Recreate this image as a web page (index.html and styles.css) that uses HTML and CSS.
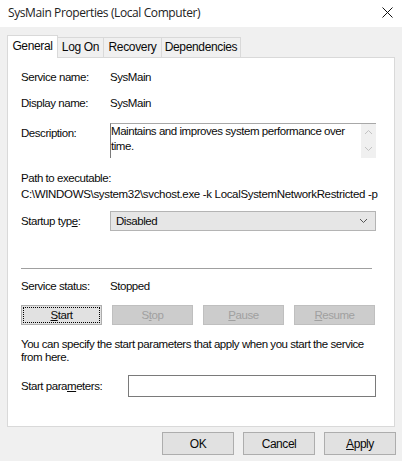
FILE: index.html
```html
<!DOCTYPE html>
<html>
<head>
<meta charset="utf-8">
<link rel="stylesheet" href="styles.css">
</head>
<body>
<div class="dialog">
  <div class="titlebar">
    <span class="title">SysMain Properties (Local Computer)</span>
    <svg class="close" width="11" height="11" viewBox="0 0 11 11"><path d="M0.5 0.5 L10.5 10.5 M10.5 0.5 L0.5 10.5" stroke="#111" stroke-width="1" fill="none"/></svg>
  </div>
  <div class="tabs">
    <div class="tab active">General</div>
    <div class="tab t2">Log On</div>
    <div class="tab t3">Recovery</div>
    <div class="tab t4">Dependencies</div>
  </div>
  <div class="panel">
    <div class="row r1"><span class="lbl">Service name:</span><span>SysMain</span></div>
    <div class="row r2"><span class="lbl">Display name:</span><span>SysMain</span></div>
    <div class="row r3">
      <span class="lbl desc-lbl">Description:</span>
      <div class="textarea">
        <div class="ta-text">Maintains and improves system performance over time.</div>
        <div class="scroll">
          <svg width="9" height="6" viewBox="0 0 9 6"><path d="M1 5 L4.5 1.5 L8 5" stroke="#c2c2c2" fill="none"/></svg>
          <svg width="9" height="6" viewBox="0 0 9 6"><path d="M1 1 L4.5 4.5 L8 1" stroke="#c2c2c2" fill="none"/></svg>
        </div>
      </div>
    </div>
    <div class="path-lbl">Path to executable:</div>
    <div class="path">C:\WINDOWS\system32\svchost.exe -k LocalSystemNetworkRestricted -p</div>
    <div class="row r4">
      <span class="lbl">Startup typ<u>e</u>:</span>
      <div class="select"><span>Disabled</span>
        <svg width="9" height="6" viewBox="0 0 9 6"><path d="M1 1 L4.5 4.5 L8 1" stroke="#555" fill="none"/></svg>
      </div>
    </div>
    <div class="sep"></div>
    <div class="row r5"><span class="lbl">Service status:</span><span>Stopped</span></div>
    <div class="btns">
      <div class="btn focus"><u>S</u>tart</div>
      <div class="btn dis">S<u>t</u>op</div>
      <div class="btn dis"><u>P</u>ause</div>
      <div class="btn dis"><u>R</u>esume</div>
    </div>
    <p class="note">You can specify the start parameters that apply when you start the service from here.</p>
    <div class="row r6">
      <span class="lbl lbl-wide">Start para<u>m</u>eters:</span>
      <div class="input"></div>
    </div>
  </div>
  <div class="footer">
    <div class="btn fbtn">OK</div>
    <div class="btn fbtn">Cancel</div>
    <div class="btn fbtn"><u>A</u>pply</div>
  </div>
</div>
</body>
</html>
```

FILE: styles.css
```css
* { box-sizing: border-box; }
html, body { margin: 0; padding: 0; }
body {
  width: 402px;
  height: 461px;
  background: #f0f0f0;
  font-family: "Liberation Sans", Arial, sans-serif;
  font-size: 11.5px;
  letter-spacing: -0.45px;
  color: #0a0a0a;
  overflow: hidden;
}
u { text-decoration-thickness: 1px; text-underline-offset: 1px; }
.dialog { display: flex; flex-direction: column; height: 461px; }
.titlebar {
  height: 27px;
  background: #fff;
  display: flex;
  align-items: center;
  justify-content: space-between;
  padding: 0 9px 2px 8px;
}
.title {
  font-family: "Open Sans", "Noto Sans", sans-serif;
  font-size: 12px;
  letter-spacing: -0.4px;
  color: #222;
}
.tabs {
  display: flex;
  align-items: flex-end;
  padding-left: 7px;
  margin-top: 8px;
  height: 22px;
  position: relative;
  z-index: 1;
  font-size: 12px;
  letter-spacing: -0.35px;
}
.tab {
  height: 20px;
  border: 1px solid #d9d9d9;
  border-bottom: none;
  background: #f0f0f0;
  display: flex;
  align-items: center;
  justify-content: center;
  margin-left: -1px;
  padding-bottom: 1px;
}
.tab.active {
  height: 23px;
  margin-left: 0;
  margin-bottom: -1px;
  background: #fff;
  width: 51px;
  padding-bottom: 3px;
}
.t2 { width: 47px; }
.t3 { width: 59px; }
.t4 { width: 80px; }
.panel {
  margin: 0 7px;
  height: 370px;
  background: #fff;
  border: 1px solid #d9d9d9;
  padding-left: 13px;
  padding-right: 18px;
}
.row { display: flex; align-items: center; }
.lbl { width: 89px; flex-shrink: 0; }
.r1 { margin-top: 11px; height: 16px; }
.r2 { margin-top: 10px; height: 16px; }
.r3 { margin-top: 12px; align-items: flex-start; }
.desc-lbl { padding-top: 4px; }
.textarea {
  width: 266px;
  height: 35px;
  display: flex;
  border-top: 1px solid #a8a8a8;
  border-left: 1px solid #7a7a7a;
}
.ta-text {
  flex: 1;
  padding: 0;
  line-height: 15px;
}
.scroll {
  width: 15px;
  background: #f0f0f0;
  display: flex;
  flex-direction: column;
  align-items: center;
  justify-content: space-between;
  padding: 5px 0 6px;
}
.path-lbl { margin-top: 12px; line-height: 16px; }
.path { line-height: 16px; white-space: nowrap; letter-spacing: -0.33px; }
.r4 { margin-top: 9px; }
.select {
  width: 266px;
  height: 20px;
  background: #e6e6e6;
  border: 1px solid #b4b4b4;
  display: flex;
  align-items: center;
  justify-content: space-between;
  padding: 0 7px 0 5px;
}
.sep {
  margin-top: 37px;
  height: 1px;
  width: 351px;
  background: #a0a0a0;
}
.r5 { margin-top: 10px; height: 14px; }
.btns {
  margin-top: 12px;
  display: flex;
  gap: 10px;
}
.btn {
  width: 81px;
  height: 20px;
  background: #e1e1e1;
  border: 1px solid #adadad;
  display: flex;
  align-items: center;
  justify-content: center;
  position: relative;
}
.btn.focus::after {
  content: "";
  position: absolute;
  inset: 1px;
  border: 1px dotted #000;
}
.btn.dis { background: #cccccc; border-color: #bfbfbf; color: #a0a0a0; }
.note {
  margin: 13px 0 0;
  line-height: 13px;
}
.r6 { margin-top: 11px; }
.lbl-wide { width: 107px; }
.input {
  width: 248px;
  height: 22px;
  border: 1px solid #7a7a7a;
  background: #fff;
}
.footer {
  display: flex;
  justify-content: flex-end;
  gap: 9px;
  padding: 5px 6px 0 0;
}
.fbtn { width: 72px; height: 23px; font-size: 12px; }
```
